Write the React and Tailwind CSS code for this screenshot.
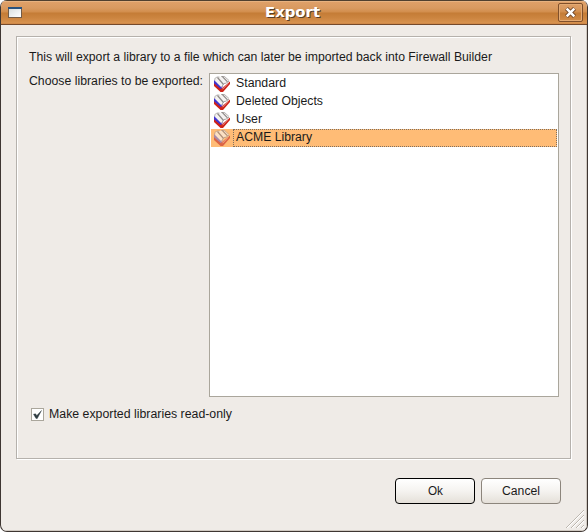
const libraries = [
  { name: 'Standard', width: 50 },
  { name: 'Deleted Objects', width: 87 },
  { name: 'User', width: 26 },
  { name: 'ACME Library', width: 76, selected: true },
];

function Label({ children, width, className = '' }) {
  return (
    <svg width={width} height="18" className={`block shrink-0 overflow-visible ${className}`}>
      <text x="0" y="12" textLength={width} lengthAdjust="spacingAndGlyphs" fontSize="12" fill="#1a1a1a">
        {children}
      </text>
    </svg>
  );
}

function LibraryIcon({ selected }) {
  const blue = selected ? '#a98aa8' : '#4035d0';
  const red = selected ? '#dc6444' : '#cf2318';
  const page = selected ? '#fbe0c4' : '#f4f2f1';
  const line = selected ? '#b0907a' : '#8f8b89';
  return (
    <svg width="16" height="16" viewBox="0 0 16 16" className="block shrink-0">
      <path d="M0 6v4l6.500 6H9l7-8V5.500L8 12z" fill={red} />
      <path d="M0 4v3.300l7 6L9 10z" fill={blue} />
      <path d="M.8 2.500 3 1h3l2-1h2.500L15 4.500v1.500L11 7.500l-3.500 4L.8 4.800z" fill={page} />
      <path d="m3.500 1.500 6 7M8.200.3l5.300 5.500" stroke={line} strokeWidth="1.200" />
      <path d="M.8 4.500V2.500L3 1h2.500M7 .5h3.500L15 4.500" stroke={line} strokeWidth=".6" fill="none" />
      <path d="m7.500 11 2.500-3.500 2-.3 3-2" stroke={line} strokeWidth=".7" fill="none" />
      <path d="m8.500 13.200 5.500-5.700" stroke={page} strokeWidth=".6" />
    </svg>
  );
}

function TitleBar() {
  return (
    <div className="flex h-[25px] items-center justify-between border-y border-t-[#50402f] border-b-[#754a2c] bg-[linear-gradient(#efc497_0px,#dfa068_1px,#d99a60_7px,#d28e4d_11px,#c47c36_12px,#cc8540_17px,#d89350_22px,#c98041_23px)] pr-[4px] pl-[7px]">
      <svg width="14" height="11" className="block" shapeRendering="crispEdges">
        <defs>
          <linearGradient id="face" x2="1" y2="1">
            <stop stopColor="#dadfdf" />
            <stop offset="1" stopColor="#ffffff" />
          </linearGradient>
        </defs>
        <rect width="14" height="11" fill="#735c48" />
        <rect x="1" y="2" width="12" height="8" fill="url(#face)" />
        <rect width="14" height="2" fill="#29527e" />
      </svg>
      <svg width="62" height="23" className="ml-[8px] block overflow-visible font-['DejaVu_Sans']">
        <text x="3" y="17" textLength="55" lengthAdjust="spacingAndGlyphs" fontSize="14.300" fontWeight="700" fill="#573d29">Export</text>
        <text x="2" y="16" textLength="55" lengthAdjust="spacingAndGlyphs" fontSize="14.300" fontWeight="700" fill="#ffffff">Export</text>
      </svg>
      <div className="flex h-[19px] w-[25px] items-center justify-center rounded-[2px] border border-[#80502b] shadow-[inset_0_0_0_1px_#e4aa73]">
        <svg width="11" height="11" viewBox="0 0 11 11" className="block">
          <path d="m1.500 1.500 8 8m0-8-8 8" stroke="#6d4528" strokeWidth="4.200" />
          <path d="m1.700 1.700 7.600 7.600m0-7.600-7.600 7.600" stroke="#fff" strokeWidth="2.500" />
        </svg>
      </div>
    </div>
  );
}

function Button({ children, width, primary }) {
  return (
    <button
      className={`flex h-[26px] w-[80px] items-center justify-center rounded-[4px] border bg-linear-to-b from-white via-[#f5f3f0] to-[#e5e0d9] ${
        primary ? 'border-black' : 'border-[#8c857c]'
      }`}
    >
      <Label width={width} className="mt-px">{children}</Label>
    </button>
  );
}

export default function App() {
  return (
    <div className="h-[532px] w-[588px] bg-white font-['Liberation_Sans',sans-serif]">
      <div className="flex h-full flex-col overflow-hidden rounded-[7px] border-x border-b border-[#3e3632] bg-[#efebe7]">
        <TitleBar />
        <div className="flex grow flex-col border-r border-b border-[#cfc8c0]">
          <div className="mt-[11px] ml-[15px] h-[423px] w-[555px] border border-[#b5b1ac] pt-[12px] pl-[12px] shadow-[inset_1px_1px_0_#fff,1px_1px_0_#fff]">
            <Label width={463}>This will export a library to a file which can later be imported back into Firewall Builder</Label>
            <div className="mt-[6px] flex">
              <Label width={174} className="mr-[6px]">Choose libraries to be exported:</Label>
              <div className="h-[324px] w-[350px] border border-[#aaa69c] bg-white p-px">
                {libraries.map((item) => (
                  <div key={item.name} className={`flex h-[18px] items-center pl-[3px] ${item.selected ? 'bg-[#ffbc76]' : ''}`}>
                    <LibraryIcon selected={item.selected} />
                    <div className={`ml-[3px] flex h-[18px] grow items-center border border-dotted pl-[2px] ${item.selected ? 'border-[#807060]' : 'border-transparent'}`}>
                      <Label width={item.width}>{item.name}</Label>
                    </div>
                  </div>
                ))}
              </div>
            </div>
            <div className="mt-[8px] ml-[2px] flex items-center gap-[5px]">
              <div className="flex h-[13px] w-[13px] items-center justify-center border border-[#aaa69c] bg-white">
                <svg width="9" height="9" viewBox="0 0 9 9" className="block">
                  <path d="m.5 4.200 2-.4 1.300 1.700L8.500.5 4.300 8.500H3z" fill="#2f3c42" stroke="#2f3c42" strokeWidth=".4" />
                </svg>
              </div>
              <Label width={183} className="relative top-px">Make exported libraries read-only</Label>
            </div>
          </div>
          <div className="mt-[19px] flex justify-end gap-[6px] pr-[25px]">
            <Button width={15} primary>Ok</Button>
            <Button width={38}>Cancel</Button>
          </div>
          <svg width="18" height="18" className="mt-auto mr-[2px] mb-[2px] block self-end">
            <path d="M1 18 18 1M6 18 18 6M11 18l7-7M16 18l2-2" stroke="#fff" strokeWidth="1.200" />
            <path d="M0 18 18 0M5 18 18 5M10 18l8-8M15 18l3-3" stroke="#bcb6ae" strokeWidth="1" />
          </svg>
        </div>
      </div>
    </div>
  );
}
